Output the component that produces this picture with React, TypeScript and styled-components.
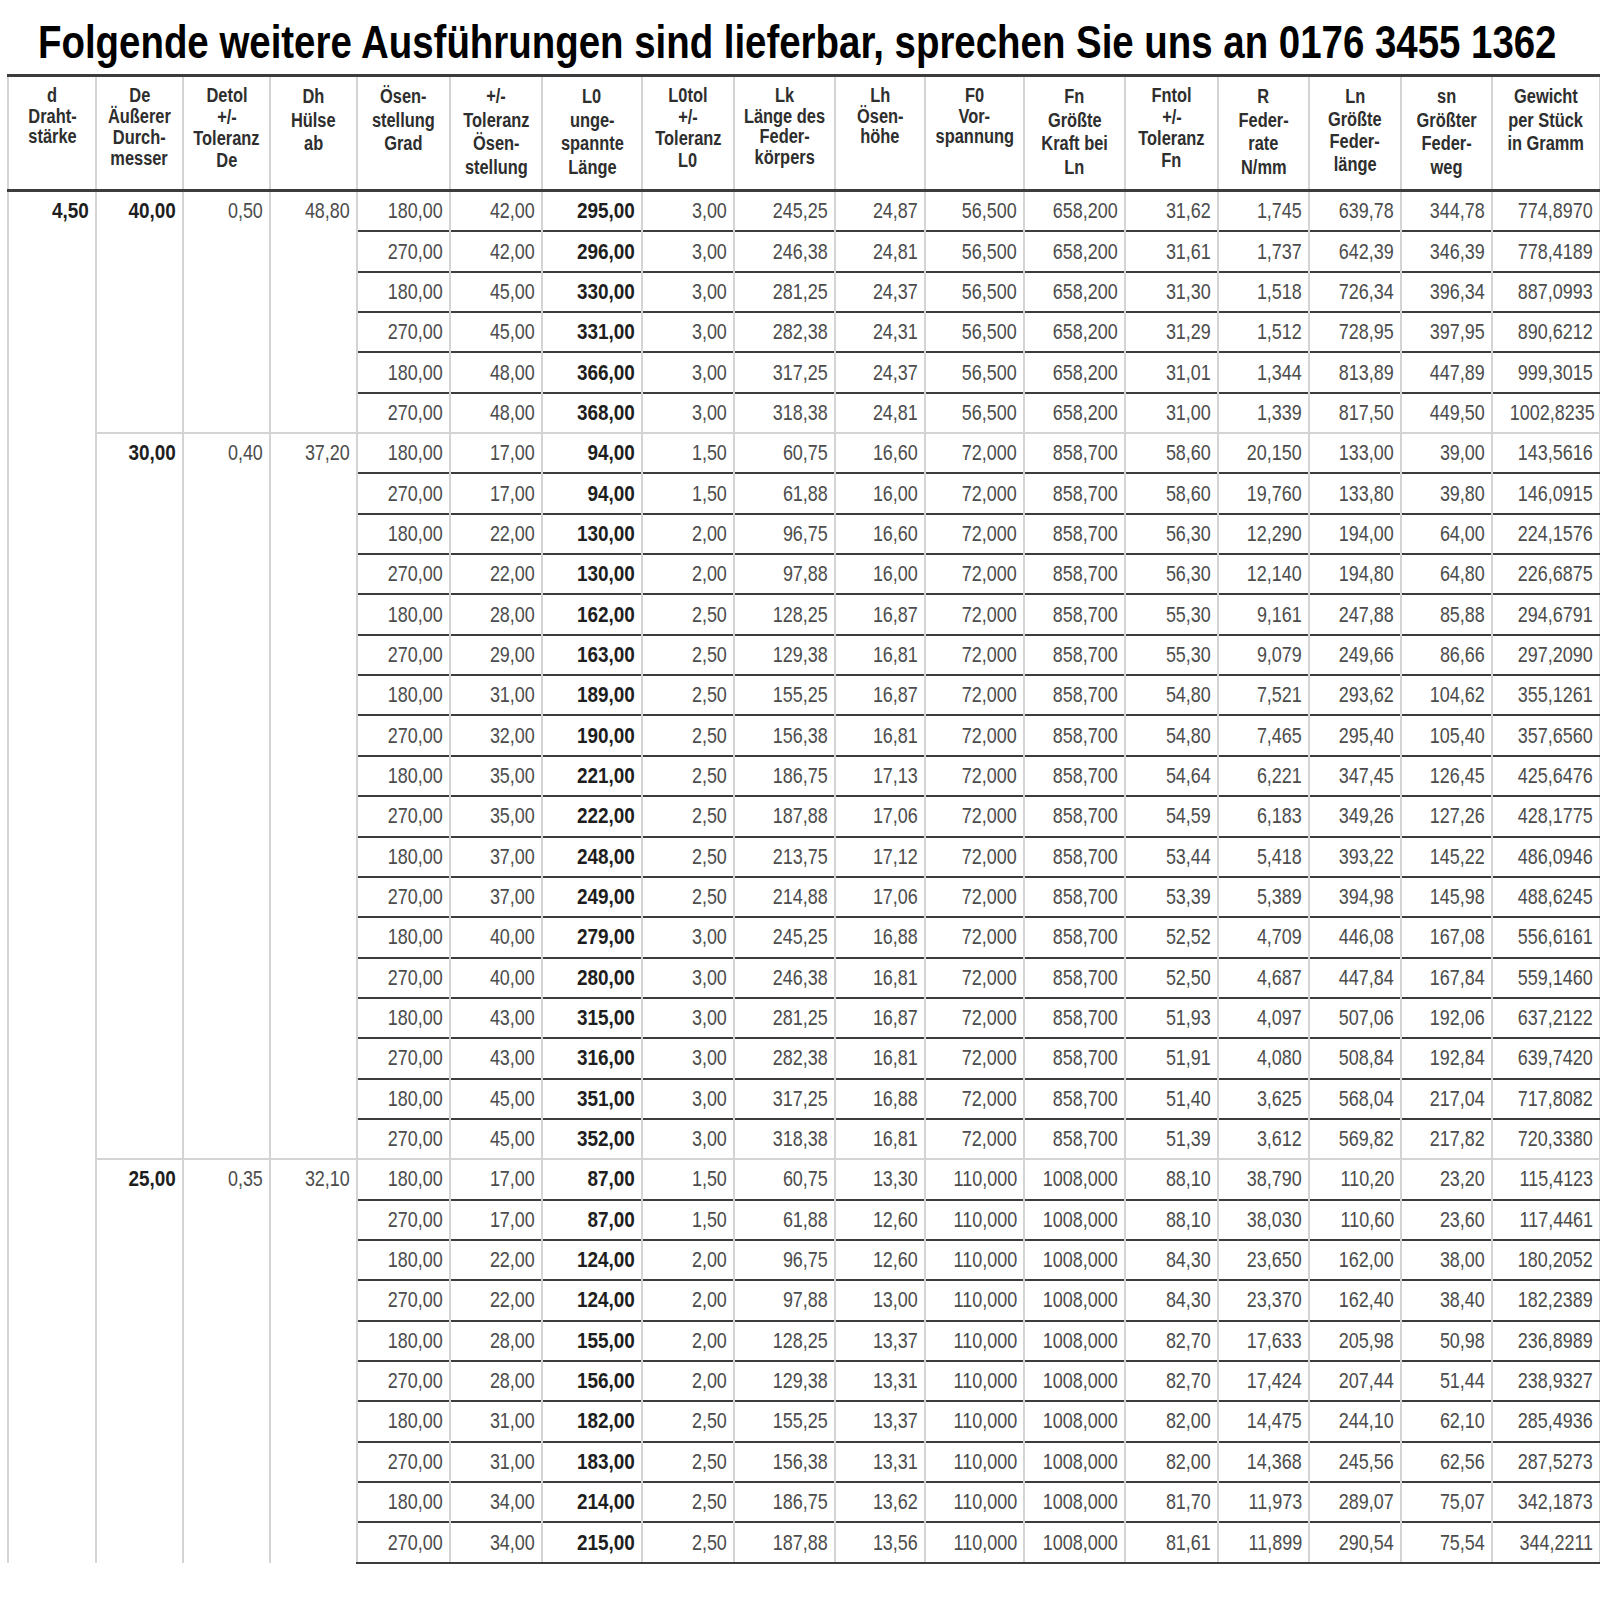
import React from "react";
import styled, { createGlobalStyle } from "styled-components";

// Helvetica Condensed look: Arial metrics squeezed horizontally
const SANS = `"Liberation Sans", Arial, sans-serif`;

const GlobalStyle = createGlobalStyle`
    html, body {
        margin: 0;
        padding: 0;
        background: #ffffff;
    }
    body {
        font-family: ${SANS};
        color: #222;
    }
`;

const Page = styled.div`
    width: 1600px;
    overflow: hidden;
    display: flex;
    flex-direction: column;
`;

const Title = styled.h1`
    box-sizing: border-box;
    margin: 0;
    height: 74px;
    padding-top: 19px;
    padding-right: 6px;
    display: flex;
    justify-content: center;
    overflow: hidden;
    font-family: ${SANS};
    font-weight: 700;
    font-size: 46px;
    line-height: 46px;
    color: #000;
    white-space: nowrap;
`;

const Squeeze = styled.span<{ $origin: "left" | "center" | "right"; $scale: number }>`
    display: inline-block;
    white-space: nowrap;
    transform: scaleX(${(p) => p.$scale});
    transform-origin: ${(p) => p.$origin} center;
`;

const TableWrap = styled.div`
    padding-left: 7px;
`;

const Table = styled.table`
    width: 1592px;
    table-layout: fixed;
    border-collapse: collapse;
    border-top: 3px solid #3c3c3c;
    border-right: 2px solid #d4d4d4;
`;

const HeadCell = styled.th<{ $lh: number }>`
    height: 104px;
    padding: 8px 0 0;
    vertical-align: top;
    text-align: center;
    font-family: ${SANS};
    font-weight: 700;
    font-size: 20px;
    line-height: ${(p) => p.$lh}px;
    color: #2e2e2e;
    border-left: 2px solid #d4d4d4;
    border-bottom: 3px solid #3c3c3c;
    white-space: nowrap;
`;

const HeadLine = styled.div`
    display: block;
`;

type Line = "dark" | "light" | "none";

const Cell = styled.td<{ $bold?: boolean; $line?: Line; $last?: boolean }>`
    height: 38.35px;
    padding: 0 6px 0 0;
    text-align: right;
    vertical-align: middle;
    font-family: ${SANS};
    font-size: 21.5px;
    line-height: 24px;
    font-weight: ${(p) => (p.$bold ? 700 : 400)};
    color: ${(p) => (p.$bold ? "#1e1e1e" : "#4c4c4c")};
    border-left: 2px solid #d4d4d4;
    border-top: ${(p) =>
        p.$line === "dark" ? "2px solid #3c3c3c" : p.$line === "light" ? "2px solid #d4d4d4" : "none"};
    border-bottom: ${(p) => (p.$last ? "2px solid #3c3c3c" : "none")};
    white-space: nowrap;
`;

const GroupCell = styled(Cell)`
    vertical-align: top;
    padding-top: 7px;
`;

const widths = [88, 87, 87, 87, 93, 92, 100, 92, 101, 90, 99, 101, 93, 91, 92, 91, 108];

const headers: { lines: string[]; lh: number }[] = [
    { lines: ["d", "Draht-", "stärke"], lh: 20.5 },
    { lines: ["De", "Äußerer", "Durch-", "messer"], lh: 21 },
    { lines: ["Detol", "+/-", "Toleranz", "De"], lh: 21.5 },
    { lines: ["Dh", "Hülse", "ab"], lh: 23.5 },
    { lines: ["Ösen-", "stellung", "Grad"], lh: 23.5 },
    { lines: ["+/-", "Toleranz", "Ösen-", "stellung"], lh: 23.5 },
    { lines: ["L0", "unge-", "spannte", "Länge"], lh: 23.5 },
    { lines: ["L0tol", "+/-", "Toleranz", "L0"], lh: 21.5 },
    { lines: ["Lk", "Länge des", "Feder-", "körpers"], lh: 20.5 },
    { lines: ["Lh", "Ösen-", "höhe"], lh: 20.5 },
    { lines: ["F0", "Vor-", "spannung"], lh: 20.5 },
    { lines: ["Fn", "Größte", "Kraft bei", "Ln"], lh: 23.5 },
    { lines: ["Fntol", "+/-", "Toleranz", "Fn"], lh: 21.5 },
    { lines: ["R", "Feder-", "rate", "N/mm"], lh: 23.5 },
    { lines: ["Ln", "Größte", "Feder-", "länge"], lh: 22.5 },
    { lines: ["sn", "Größter", "Feder-", "weg"], lh: 23.5 },
    { lines: ["Gewicht", "per Stück", "in Gramm"], lh: 23.5 },
];

interface Group {
    de: string;
    detol: string;
    dh: string;
    rows: string[];
}

const groups: Group[] = [
    {
        de: "40,00",
        detol: "0,50",
        dh: "48,80",
        rows: [
            "180,00 42,00 295,00 3,00 245,25 24,87 56,500 658,200 31,62 1,745 639,78 344,78 774,8970",
            "270,00 42,00 296,00 3,00 246,38 24,81 56,500 658,200 31,61 1,737 642,39 346,39 778,4189",
            "180,00 45,00 330,00 3,00 281,25 24,37 56,500 658,200 31,30 1,518 726,34 396,34 887,0993",
            "270,00 45,00 331,00 3,00 282,38 24,31 56,500 658,200 31,29 1,512 728,95 397,95 890,6212",
            "180,00 48,00 366,00 3,00 317,25 24,37 56,500 658,200 31,01 1,344 813,89 447,89 999,3015",
            "270,00 48,00 368,00 3,00 318,38 24,81 56,500 658,200 31,00 1,339 817,50 449,50 1002,8235",
        ],
    },
    {
        de: "30,00",
        detol: "0,40",
        dh: "37,20",
        rows: [
            "180,00 17,00 94,00 1,50 60,75 16,60 72,000 858,700 58,60 20,150 133,00 39,00 143,5616",
            "270,00 17,00 94,00 1,50 61,88 16,00 72,000 858,700 58,60 19,760 133,80 39,80 146,0915",
            "180,00 22,00 130,00 2,00 96,75 16,60 72,000 858,700 56,30 12,290 194,00 64,00 224,1576",
            "270,00 22,00 130,00 2,00 97,88 16,00 72,000 858,700 56,30 12,140 194,80 64,80 226,6875",
            "180,00 28,00 162,00 2,50 128,25 16,87 72,000 858,700 55,30 9,161 247,88 85,88 294,6791",
            "270,00 29,00 163,00 2,50 129,38 16,81 72,000 858,700 55,30 9,079 249,66 86,66 297,2090",
            "180,00 31,00 189,00 2,50 155,25 16,87 72,000 858,700 54,80 7,521 293,62 104,62 355,1261",
            "270,00 32,00 190,00 2,50 156,38 16,81 72,000 858,700 54,80 7,465 295,40 105,40 357,6560",
            "180,00 35,00 221,00 2,50 186,75 17,13 72,000 858,700 54,64 6,221 347,45 126,45 425,6476",
            "270,00 35,00 222,00 2,50 187,88 17,06 72,000 858,700 54,59 6,183 349,26 127,26 428,1775",
            "180,00 37,00 248,00 2,50 213,75 17,12 72,000 858,700 53,44 5,418 393,22 145,22 486,0946",
            "270,00 37,00 249,00 2,50 214,88 17,06 72,000 858,700 53,39 5,389 394,98 145,98 488,6245",
            "180,00 40,00 279,00 3,00 245,25 16,88 72,000 858,700 52,52 4,709 446,08 167,08 556,6161",
            "270,00 40,00 280,00 3,00 246,38 16,81 72,000 858,700 52,50 4,687 447,84 167,84 559,1460",
            "180,00 43,00 315,00 3,00 281,25 16,87 72,000 858,700 51,93 4,097 507,06 192,06 637,2122",
            "270,00 43,00 316,00 3,00 282,38 16,81 72,000 858,700 51,91 4,080 508,84 192,84 639,7420",
            "180,00 45,00 351,00 3,00 317,25 16,88 72,000 858,700 51,40 3,625 568,04 217,04 717,8082",
            "270,00 45,00 352,00 3,00 318,38 16,81 72,000 858,700 51,39 3,612 569,82 217,82 720,3380",
        ],
    },
    {
        de: "25,00",
        detol: "0,35",
        dh: "32,10",
        rows: [
            "180,00 17,00 87,00 1,50 60,75 13,30 110,000 1008,000 88,10 38,790 110,20 23,20 115,4123",
            "270,00 17,00 87,00 1,50 61,88 12,60 110,000 1008,000 88,10 38,030 110,60 23,60 117,4461",
            "180,00 22,00 124,00 2,00 96,75 12,60 110,000 1008,000 84,30 23,650 162,00 38,00 180,2052",
            "270,00 22,00 124,00 2,00 97,88 13,00 110,000 1008,000 84,30 23,370 162,40 38,40 182,2389",
            "180,00 28,00 155,00 2,00 128,25 13,37 110,000 1008,000 82,70 17,633 205,98 50,98 236,8989",
            "270,00 28,00 156,00 2,00 129,38 13,31 110,000 1008,000 82,70 17,424 207,44 51,44 238,9327",
            "180,00 31,00 182,00 2,50 155,25 13,37 110,000 1008,000 82,00 14,475 244,10 62,10 285,4936",
            "270,00 31,00 183,00 2,50 156,38 13,31 110,000 1008,000 82,00 14,368 245,56 62,56 287,5273",
            "180,00 34,00 214,00 2,50 186,75 13,62 110,000 1008,000 81,70 11,973 289,07 75,07 342,1873",
            "270,00 34,00 215,00 2,50 187,88 13,56 110,000 1008,000 81,61 11,899 290,54 75,54 344,2211",
        ],
    },
];

const totalRows = groups.reduce((n, g) => n + g.rows.length, 0);

function Num({ children, bold }: { children: React.ReactNode; bold?: boolean }) {
    return (
        <Squeeze $origin="right" $scale={bold ? 0.88 : 0.835}>
            {children}
        </Squeeze>
    );
}

function App() {
    return (
        <>
            <GlobalStyle />
            <Page>
                <Title>
                    <Squeeze $origin="center" $scale={0.835}>
                        Folgende weitere Ausführungen sind lieferbar, sprechen Sie uns an 0176 3455 1362
                    </Squeeze>
                </Title>
                <TableWrap>
                    <Table>
                        <colgroup>
                            {widths.map((w, i) => (
                                <col key={i} style={{ width: w }} />
                            ))}
                        </colgroup>
                        <thead>
                            <tr>
                                {headers.map((h, i) => (
                                    <HeadCell key={i} $lh={h.lh}>
                                        {h.lines.map((l, j) => (
                                            <HeadLine key={j}>
                                                <Squeeze $origin="center" $scale={0.82}>
                                                    {l}
                                                </Squeeze>
                                            </HeadLine>
                                        ))}
                                    </HeadCell>
                                ))}
                            </tr>
                        </thead>
                        <tbody>
                            {groups.map((g, gi) =>
                                g.rows.map((r, ri) => {
                                    const values = r.split(" ");
                                    const first = ri === 0;
                                    const lastRow = gi === groups.length - 1 && ri === g.rows.length - 1;
                                    const line: Line = first ? (gi === 0 ? "none" : "light") : "dark";
                                    return (
                                        <tr key={`${gi}-${ri}`}>
                                            {gi === 0 && first && (
                                                <GroupCell $bold rowSpan={totalRows} $line="none">
                                                    <Num bold>4,50</Num>
                                                </GroupCell>
                                            )}
                                            {first && (
                                                <>
                                                    <GroupCell $bold rowSpan={g.rows.length} $line={line}>
                                                        <Num bold>{g.de}</Num>
                                                    </GroupCell>
                                                    <GroupCell rowSpan={g.rows.length} $line={line}>
                                                        <Num>{g.detol}</Num>
                                                    </GroupCell>
                                                    <GroupCell rowSpan={g.rows.length} $line={line}>
                                                        <Num>{g.dh}</Num>
                                                    </GroupCell>
                                                </>
                                            )}
                                            {values.map((v, vi) => (
                                                <Cell key={vi} $bold={vi === 2} $line={line} $last={lastRow}>
                                                    <Num bold={vi === 2}>{v}</Num>
                                                </Cell>
                                            ))}
                                        </tr>
                                    );
                                })
                            )}
                        </tbody>
                    </Table>
                </TableWrap>
            </Page>
        </>
    );
}

export default App;
